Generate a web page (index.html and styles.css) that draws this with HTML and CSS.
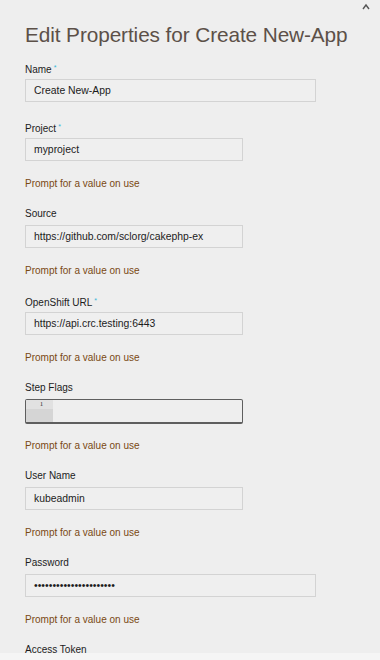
FILE: index.html
```html
<!DOCTYPE html>
<html lang="en">
<head>
<meta charset="utf-8">
<title>Edit Properties</title>
<link rel="stylesheet" href="styles.css">
</head>
<body>
<button class="close" aria-label="Close">
  <svg width="10" height="8" viewBox="0 0 10 8"><path d="M2 7 L5 3 L8 7" fill="none" stroke="#555" stroke-width="1.4"/></svg>
</button>
<main class="dialog">
  <h1 class="title">Edit Properties for Create New-App</h1>

  <div class="field first">
    <label class="label">Name<span class="req">*</span></label>
    <div class="input wide">Create New-App</div>
  </div>

  <div class="field">
    <label class="label">Project<span class="req">*</span></label>
    <div class="input">myproject</div>
    <div class="prompt">Prompt for a value on use</div>
  </div>

  <div class="field">
    <label class="label">Source</label>
    <div class="input">https://github.com/sclorg/cakephp-ex</div>
    <div class="prompt">Prompt for a value on use</div>
  </div>

  <div class="field">
    <label class="label">OpenShift URL<span class="req">*</span></label>
    <div class="input">https://api.crc.testing:6443</div>
    <div class="prompt">Prompt for a value on use</div>
  </div>

  <div class="field">
    <label class="label">Step Flags</label>
    <div class="editor">
      <div class="gutter"><div class="lineno active">1</div></div>
      <div class="code"></div>
    </div>
    <div class="prompt after-editor">Prompt for a value on use</div>
  </div>

  <div class="field">
    <label class="label">User Name</label>
    <div class="input">kubeadmin</div>
    <div class="prompt">Prompt for a value on use</div>
  </div>

  <div class="field">
    <label class="label">Password</label>
    <div class="input wide dots">••••••••••••••••••••••</div>
    <div class="prompt">Prompt for a value on use</div>
  </div>

  <div class="field">
    <label class="label">Access Token</label>
  </div>
</main>
<div class="footer"></div>
</body>
</html>
```
FILE: styles.css
```css
html, body {
  margin: 0;
  padding: 0;
  background: #eeeeee;
  font-family: "Liberation Sans", Arial, sans-serif;
  color: #1c1c1c;
  overflow: hidden;
  height: 660px;
}

.close {
  position: absolute;
  top: 1px;
  right: 8px;
  width: 12px;
  height: 9px;
  padding: 0;
  border: 0;
  background: transparent;
  display: flex;
  align-items: center;
  justify-content: center;
}

.dialog {
  padding: 22px 0 0 25px;
  display: flex;
  flex-direction: column;
}

.title {
  margin: 0 0 13px 0;
  font-size: 20.8px;
  line-height: 26px;
  font-weight: normal;
  color: #5c5048;
  letter-spacing: -0.1px;
}

.field {
  display: flex;
  flex-direction: column;
  align-items: flex-start;
  margin-bottom: 17px;
}

.field.first {
  margin-bottom: 18px;
}

.label {
  font-size: 10px;
  line-height: 14px;
  height: 14px;
  margin-bottom: 4px;
  color: #1c1c1c;
}

.req {
  color: #35b6d8;
  font-size: 7px;
  vertical-align: 3px;
  margin-left: 2px;
}

.input {
  box-sizing: border-box;
  width: 218px;
  height: 23px;
  padding: 0 8px;
  border: 1px solid #d3d3d3;
  background: #efefef;
  font-size: 10.4px;
  line-height: 21px;
  color: #1c1c1c;
  white-space: nowrap;
  overflow: hidden;
}

.input.wide {
  width: 291px;
}

.dots {
  font-size: 10.5px;
  letter-spacing: 0;
}

.prompt {
  margin-top: 16px;
  margin-bottom: -1px;
  font-size: 10px;
  line-height: 14px;
  color: #7a4913;
}

.prompt.after-editor {
  margin-top: 15px;
}

.editor {
  box-sizing: border-box;
  width: 218px;
  height: 25px;
  border: 1px solid #5e5e5e;
  border-bottom-width: 2px;
  border-radius: 2px;
  background: #eeeeee;
  display: flex;
  overflow: hidden;
}

.gutter {
  width: 27px;
  background: #d5d5d5;
  display: flex;
  flex-direction: column;
}

.lineno {
  height: 9px;
  font-family: "Liberation Serif", "Times New Roman", serif;
  font-size: 7px;
  line-height: 9px;
  text-align: center;
  padding-left: 4px;
  color: #333;
}

.lineno.active {
  background: #e1e1e1;
}

.code {
  flex: 1;
}

.footer {
  position: fixed;
  left: 0;
  right: 0;
  bottom: 0;
  height: 7px;
  background: #f5f5f5;
}
```
